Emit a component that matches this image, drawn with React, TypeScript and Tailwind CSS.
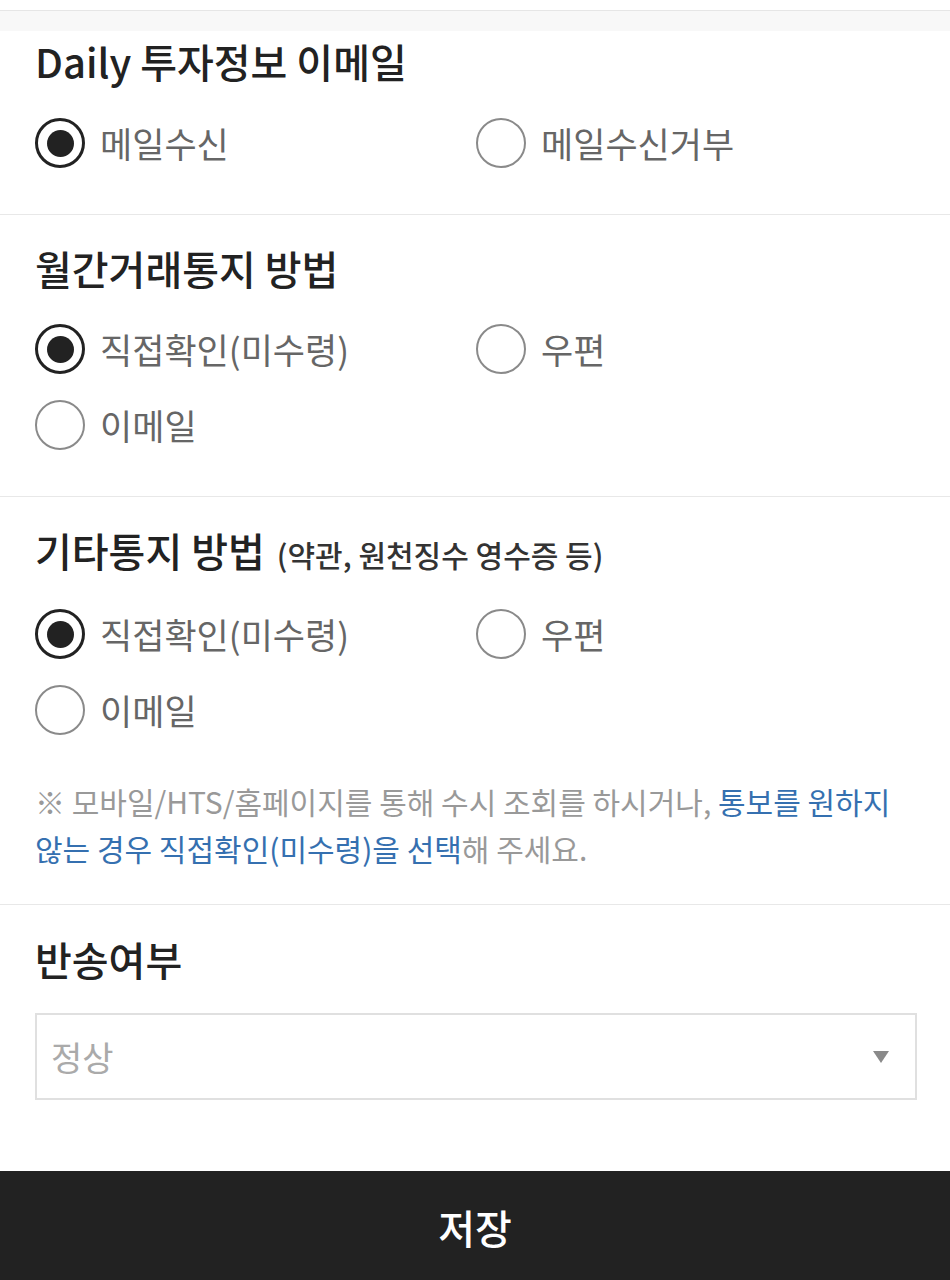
import React from "react";

const font = { fontFamily: '"Noto Sans CJK KR", "Noto Sans", sans-serif' };

function Radio({ label, checked }: { label: string; checked?: boolean }) {
  return (
    <div className="flex h-[50px] items-center">
      {checked ? (
        <div className="flex h-[50px] w-[50px] shrink-0 items-center justify-center rounded-full border-[3px] border-[#222]">
          <div className="h-[27px] w-[27px] rounded-full bg-[#222]" />
        </div>
      ) : (
        <div className="h-[50px] w-[50px] shrink-0 rounded-full border-2 border-[#8a8a8a]" />
      )}
      <span className="ml-[15px] text-[35px] leading-[50px] text-[#666]">{label}</span>
    </div>
  );
}

function RadioGroup({ items, checked }: { items: string[]; checked: number }) {
  return (
    <div className="grid grid-cols-[441px_1fr] gap-y-[26px]">
      {items.map((it, i) => (
        <Radio key={i} label={it} checked={i === checked} />
      ))}
    </div>
  );
}

export default function App() {
  return (
    <div className="flex min-h-[1280px] w-[950px] flex-col bg-white" style={font}>
      <div className="h-[11px] border-b border-[#e6e6e6] bg-white" />
      <div className="h-[20px] bg-[#f8f8f8]" />

      <section className="border-b border-[#e8e8e8] pb-[46px] pl-[35px] pt-[5px]">
        <h2 className="text-[40px] font-medium leading-[50px] text-[#222]">Daily 투자정보 이메일</h2>
        <div className="mt-[32px]">
          <RadioGroup items={["메일수신", "메일수신거부"]} checked={0} />
        </div>
      </section>

      <section className="border-b border-[#e8e8e8] pb-[46px] pl-[35px] pt-[28px]">
        <h2 className="text-[40px] font-medium leading-[50px] text-[#222]">월간거래통지 방법</h2>
        <div className="mt-[31px]">
          <RadioGroup items={["직접확인(미수령)", "우편", "이메일"]} checked={0} />
        </div>
      </section>

      <section className="border-b border-[#e8e8e8] pb-[32px] pl-[35px] pr-[35px] pt-[28px]">
        <h2 className="flex items-baseline text-[40px] font-medium leading-[50px] text-[#222]">
          기타통지 방법
          <span className="ml-[12px] text-[30px] font-medium text-[#333]">(약관, 원천징수 영수증 등)</span>
        </h2>
        <div className="mt-[30px]">
          <RadioGroup items={["직접확인(미수령)", "우편", "이메일"]} checked={0} />
        </div>
        <p className="mt-[43px] text-[30px] leading-[47px] text-[#999]">
          ※ 모바일/HTS/홈페이지를 통해 수시 조회를 하시거나,{" "}
          <span className="text-[#3570b0]">통보를 원하지 않는 경우 직접확인(미수령)을 선택</span>해 주세요.
        </p>
      </section>

      <section className="pb-[71px] pl-[35px] pr-[33px] pt-[29px]">
        <h2 className="text-[40px] font-medium leading-[50px] text-[#222]">반송여부</h2>
        <div className="mt-[29px] flex h-[87px] items-center justify-between border-2 border-[#e0e0e0] pl-[14px] pr-[26px]">
          <span className="text-[34px] text-[#aaa]">정상</span>
          <svg width="16" height="12" viewBox="0 0 16 12">
            <polygon points="0,0 16,0 8,12" fill="#8a8a8a" />
          </svg>
        </div>
      </section>

      <button className="flex h-[111px] w-full items-center justify-center bg-[#222] text-[40px] font-medium text-white">
        저장
      </button>
    </div>
  );
}
